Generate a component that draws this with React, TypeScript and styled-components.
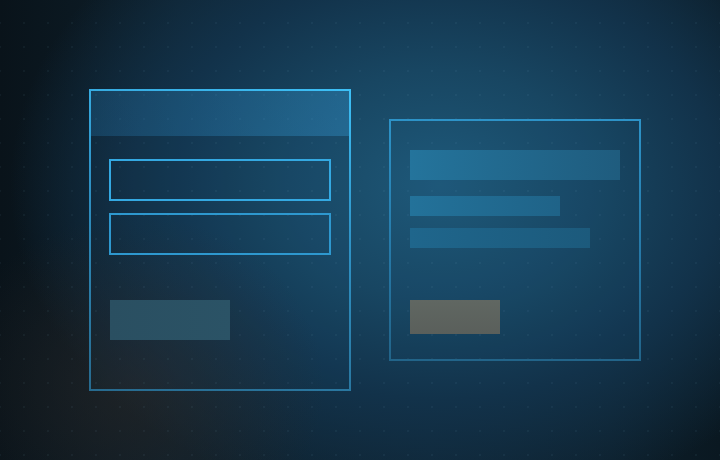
import React from "react";
import styled, { createGlobalStyle } from "styled-components";

const Global = createGlobalStyle`
  html, body { margin: 0; padding: 0; background: #0d1e29; }
  body { font-family: "Liberation Sans", Arial, sans-serif; }
  #root { width: 720px; height: 460px; overflow: hidden; }
`;

const Scene = styled.div`
  width: 720px;
  height: 460px;
  box-sizing: border-box;
  padding: 89px 0 0 89px;
  display: flex;
  align-items: flex-start;
  gap: 38px;
  background:
    radial-gradient(circle, rgba(140, 200, 230, 0.055) 0.9px, transparent 1.4px) -12px -13px / 24px 24px,
    radial-gradient(ellipse 190px 170px at 135px 385px, rgba(44, 40, 38, 0.55), rgba(44, 40, 38, 0) 100%),
    radial-gradient(ellipse 430px 330px at 440px 185px, #1e5878 0%, #184662 35%, #12324a 65%, rgba(14, 36, 52, 0) 100%),
    linear-gradient(to right, #09131a 0%, #0e202c 25%, #0f2433 60%, #0d1f2b 85%, #0a1821 100%);
`;

const Panel = styled.div<{ $w: number; $h: number; $offset?: number; $variant: "form" | "card" }>`
  box-sizing: border-box;
  width: ${(p) => p.$w}px;
  height: ${(p) => p.$h}px;
  margin-top: ${(p) => p.$offset ?? 0}px;
  border: 2px solid;
  border-image: ${(p) =>
      p.$variant === "form"
        ? "linear-gradient(195deg, #3dc0f7 0%, #2f94c8 40%, #276a8e 100%)"
        : "linear-gradient(180deg, #2d93c8 0%, #2679a8 55%, #226489 100%)"}
    1;
  background: rgba(40, 110, 150, 0.06);
  display: flex;
  flex-direction: column;
`;

const Header = styled.div`
  height: 45px;
  flex: none;
  background: linear-gradient(to right, rgba(40, 130, 190, 0.25), rgba(55, 160, 220, 0.34));
`;

const FormBody = styled.div`
  display: flex;
  flex-direction: column;
  align-items: flex-start;
  padding: 23px 18px 0 18px;
`;

const Input = styled.div<{ $dim?: boolean }>`
  box-sizing: border-box;
  width: 222px;
  height: 42px;
  border: 2px solid ${(p) => (p.$dim ? "#2e98cf" : "#34a9e2")};
  & + & {
    margin-top: 12px;
  }
`;

const Button = styled.div<{ $w: number; $h: number; $tone: "blue" | "gray"; $top: number; $indent?: number }>`
  width: ${(p) => p.$w}px;
  height: ${(p) => p.$h}px;
  margin-top: ${(p) => p.$top}px;
  margin-left: ${(p) => p.$indent ?? 0}px;
  background: ${(p) =>
    p.$tone === "blue"
      ? "linear-gradient(to right, #2a4f61, #2b5366)"
      : "linear-gradient(to bottom, #606762, #5a5f5b)"};
`;

const CardBody = styled.div`
  display: flex;
  flex-direction: column;
  align-items: flex-start;
  padding: 29px 0 0 19px;
`;

const Bar = styled.div<{ $w: number; $h: number; $top: number; $from: string; $to: string }>`
  width: ${(p) => p.$w}px;
  height: ${(p) => p.$h}px;
  margin-top: ${(p) => p.$top}px;
  background: linear-gradient(to right, ${(p) => p.$from}, ${(p) => p.$to});
`;

export default function App() {
  return (
    <>
      <Global />
      <Scene>
        <Panel $w={262} $h={302} $variant="form">
          <Header />
          <FormBody>
            <Input />
            <Input $dim />
            <Button $w={120} $h={40} $top={45} $indent={1} $tone="blue" />
          </FormBody>
        </Panel>
        <Panel $w={252} $h={242} $offset={30} $variant="card">
          <CardBody>
            <Bar $w={210} $h={30} $top={0} $from="#24749c" $to="#1f5c7e" />
            <Bar $w={150} $h={20} $top={16} $from="#23729a" $to="#1f6388" />
            <Bar $w={180} $h={20} $top={12} $from="#1f668c" $to="#1c5a7c" />
            <Button $w={90} $h={34} $top={52} $tone="gray" />
          </CardBody>
        </Panel>
      </Scene>
    </>
  );
}
